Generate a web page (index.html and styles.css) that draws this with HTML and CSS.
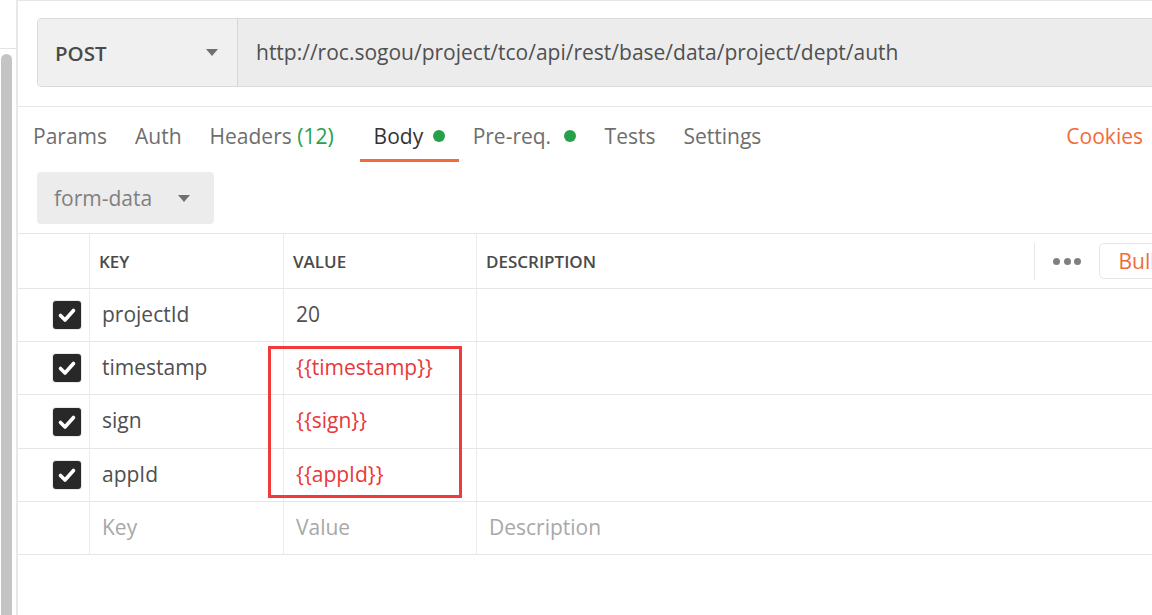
FILE: index.html
```html
<!DOCTYPE html>
<html>
<head>
<meta charset="utf-8">
<link rel="stylesheet" href="styles.css">
</head>
<body>
<div class="app">
  <aside class="side">
    <div class="side-top"></div>
    <div class="scroll"></div>
  </aside>
  <main class="main">
    <section class="req">
      <div class="reqbar">
        <div class="method"><span class="method-name">POST</span><span class="caret"></span></div>
        <div class="url">http://roc.sogou/project/tco/api/rest/base/data/project/dept/auth</div>
      </div>
    </section>
    <nav class="tabs">
      <div class="tab">Params</div>
      <div class="tab">Auth</div>
      <div class="tab">Headers <span class="count">(12)</span></div>
      <div class="tab active">Body <span class="dot"></span></div>
      <div class="tab prereq">Pre-req. <span class="dot"></span></div>
      <div class="tab tests">Tests</div>
      <div class="tab">Settings</div>
      <div class="tab cookies">Cookies</div>
    </nav>
    <div class="bodytype">
      <div class="select"><span>form-data</span><span class="caret"></span></div>
    </div>
    <div class="table">
      <div class="row head">
        <div class="cell chk"></div>
        <div class="cell">KEY</div>
        <div class="cell">VALUE</div>
        <div class="cell desc">
          <span class="desc-title">DESCRIPTION</span>
          <span class="sep"></span>
          <span class="dots"><i></i><i></i><i></i></span>
          <span class="bulk">Bulk Edit</span>
        </div>
      </div>
      <div class="row">
        <div class="cell chk"><span class="box"><svg viewBox="0 0 28 28" width="28" height="28"><path d="M7.5 14.5 L12 19 L20.5 9.5" fill="none" stroke="#fff" stroke-width="3.6" stroke-linecap="round" stroke-linejoin="round"/></svg></span></div>
        <div class="cell val">projectId</div>
        <div class="cell val">20</div>
        <div class="cell val"></div>
      </div>
      <div class="row">
        <div class="cell chk"><span class="box"><svg viewBox="0 0 28 28" width="28" height="28"><path d="M7.5 14.5 L12 19 L20.5 9.5" fill="none" stroke="#fff" stroke-width="3.6" stroke-linecap="round" stroke-linejoin="round"/></svg></span></div>
        <div class="cell val">timestamp</div>
        <div class="cell val red">{{timestamp}}</div>
        <div class="cell val"></div>
      </div>
      <div class="row tall">
        <div class="cell chk"><span class="box"><svg viewBox="0 0 28 28" width="28" height="28"><path d="M7.5 14.5 L12 19 L20.5 9.5" fill="none" stroke="#fff" stroke-width="3.6" stroke-linecap="round" stroke-linejoin="round"/></svg></span></div>
        <div class="cell val">sign</div>
        <div class="cell val red">{{sign}}</div>
        <div class="cell val"></div>
      </div>
      <div class="row">
        <div class="cell chk"><span class="box"><svg viewBox="0 0 28 28" width="28" height="28"><path d="M7.5 14.5 L12 19 L20.5 9.5" fill="none" stroke="#fff" stroke-width="3.6" stroke-linecap="round" stroke-linejoin="round"/></svg></span></div>
        <div class="cell val">appId</div>
        <div class="cell val red">{{appId}}</div>
        <div class="cell val"></div>
      </div>
      <div class="row">
        <div class="cell chk"></div>
        <div class="cell val ph">Key</div>
        <div class="cell val ph">Value</div>
        <div class="cell val ph">Description</div>
      </div>
      <div class="highlight"></div>
    </div>
  </main>
</div>
</body>
</html>
```
FILE: styles.css
```css
html, body {
  margin: 0;
  padding: 0;
  background: #fff;
}
body {
  width: 1152px;
  height: 615px;
  overflow: hidden;
  font-family: "Open Sans", "Noto Sans", sans-serif;
  color: #505050;
}
.app {
  display: flex;
  height: 615px;
}
.side {
  width: 16px;
  flex: none;
  border-right: 2px solid #e8e8e8;
  display: flex;
  flex-direction: column;
}
.side-top {
  height: 48px;
  border-bottom: 1px solid #e3e3e3;
  flex: none;
}
.scroll {
  margin: 5px 0 0 1px;
  width: 11px;
  flex: 1;
  background: #c4c4c4;
  border-radius: 6px 6px 0 0;
}
.main {
  flex: 1;
  min-width: 0;
  overflow: hidden;
  border-top: 1px solid #e6e6e6;
}
.req {
  padding: 17px 0 19px 19px;
  border-bottom: 1px solid #e6e6e6;
}
.reqbar {
  display: flex;
  width: 1200px;
  height: 69px;
  box-sizing: border-box;
  border: 1px solid #dadada;
  border-radius: 4px;
  overflow: hidden;
  font-size: 21px;
}
.method {
  width: 200px;
  flex: none;
  box-sizing: border-box;
  background: #f0f0f0;
  border-right: 1px solid #d6d6d6;
  display: flex;
  align-items: center;
  padding: 0 19px 0 17px;
}
.method-name {
  font-weight: 600;
  color: #4a4a4a;
  flex: 1;
  font-size: 20.5px;
}
.caret {
  width: 0;
  height: 0;
  border-left: 6.5px solid transparent;
  border-right: 6.5px solid transparent;
  border-top: 7px solid #707070;
}
.url {
  flex: 1;
  background: #ececec;
  display: flex;
  align-items: center;
  padding-left: 18px;
  padding-bottom: 1px;
  color: #505050;
  white-space: nowrap;
}
.tabs {
  display: flex;
  height: 55px;
  padding-left: 1px;
  font-size: 21px;
}
.tab {
  box-sizing: border-box;
  height: 55px;
  padding: 5px 14px 0;
  border-bottom: 3px solid transparent;
  display: flex;
  align-items: center;
  color: #6e6e6e;
  white-space: pre;
}
.tab.active {
  color: #333;
  border-bottom-color: #f26b3a;
  margin-left: 12px;
}
.count {
  color: #26a14a;
}
.dot {
  display: inline-block;
  width: 12px;
  height: 12px;
  border-radius: 50%;
  background: #26a14a;
  margin-left: 4px;
}
.prereq .dot {
  margin-left: 7px;
}
.tab.tests {
  margin-left: 1px;
}
.tab.cookies {
  margin-left: auto;
  color: #f26b3a;
  padding-right: 9px;
}
.bodytype {
  padding: 10px 0 9px 19px;
}
.select {
  width: 177px;
  height: 52px;
  box-sizing: border-box;
  background: #ececec;
  border-radius: 4px;
  display: flex;
  align-items: center;
  padding: 0 24px 0 17px;
  font-size: 21px;
  color: #808080;
}
.select span:first-child {
  flex: 1;
}
.table {
  position: relative;
  width: 1215px;
  border-top: 1px solid #e6e6e6;
}
.row {
  display: grid;
  grid-template-columns: 72px 194px 193px 1fr;
  height: 53px;
  box-sizing: border-box;
  border-bottom: 1px solid #e6e6e6;
}
.row.head {
  height: 55px;
}
.row.tall {
  height: 54px;
}
.cell {
  display: flex;
  align-items: center;
  border-right: 1px solid #ebebeb;
  min-width: 0;
  white-space: nowrap;
}
.cell:last-child {
  border-right: none;
}
.head .cell {
  font-size: 17px;
  font-weight: 600;
  color: #4a4a4a;
  padding-left: 9px;
}
.head .cell.chk {
  padding-left: 0;
}
.cell.desc {
  padding-right: 10px;
}
.desc-title {
  flex: 1;
}
.sep {
  width: 1px;
  height: 37px;
  background: #e6e6e6;
}
.dots {
  display: flex;
  gap: 3.5px;
  margin: 0 18px;
}
.dots i {
  width: 7px;
  height: 7px;
  border-radius: 50%;
  background: #808080;
}
.bulk {
  height: 34px;
  display: flex;
  align-items: center;
  border: 1px solid #e6e6e6;
  border-radius: 5px;
  padding: 0 18px;
  color: #f26b3a;
  font-size: 21px;
  font-weight: 400;
}
.cell.chk {
  justify-content: flex-end;
  padding-right: 8px;
}
.box {
  width: 28px;
  height: 28px;
  border-radius: 3px;
  background: #282828;
  display: block;
  box-shadow: 0 0 0 1px #e9e9e9;
}
.box svg {
  display: block;
}
.val {
  padding-left: 12px;
  padding-bottom: 3px;
  font-size: 21px;
  color: #505050;
}
.val.red {
  color: #e8383a;
}
.val.ph {
  color: #a8a8a8;
}
.highlight {
  position: absolute;
  left: 250px;
  top: 112px;
  width: 194px;
  height: 152px;
  box-sizing: border-box;
  border: 3px solid #ef3b3b;
}
```
